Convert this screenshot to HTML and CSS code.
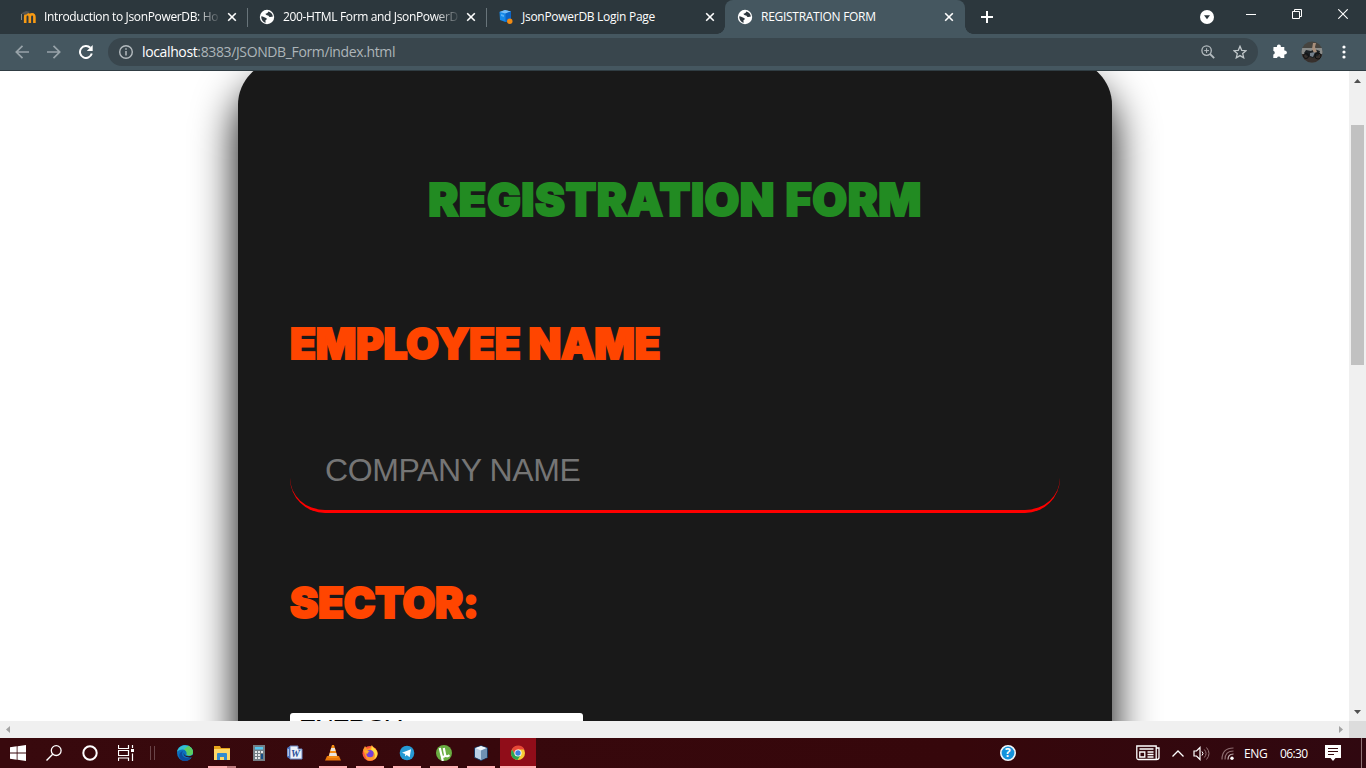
FILE: index.html
```
<!DOCTYPE html>
<html lang="en">
<head>
<meta charset="utf-8">
<title>REGISTRATION FORM</title>
<link rel="stylesheet" href="styles.css">
</head>
<body>
<svg class="defs" width="0" height="0">
  <symbol id="close" viewBox="0 0 10 10"><path d="M1.200 1.200l7.600 7.600M8.800 1.200L1.200 8.800" stroke="#fff" stroke-width="1.600"/></symbol>
  <symbol id="globe" viewBox="0 0 16 16"><circle cx="8" cy="8" r="7.200" fill="#fff"/><path d="M2.300 7.200c2 .2 3.200 1 4.700 1.800 1.300.6 1 1.600-.1 1.900-.8.300-.3 1.300-.2 2.800C4 13 2 10.500 2.300 7.200zM9.300 2.500c-.3 1.600-1.500 1.900-2.600 2.100-.5 1.200.8 1.700 2.300 1.800.9.200 1 1.700 2.400 1.700 1 0 1.700-.3 2.500-.5-.3-2.400-2-4.500-4.600-5.100z" fill="#2f3940"/></symbol>
</svg>
<div class="desktop">
  <header class="tabstrip">
    <div class="tab tab-first">
      <svg class="favicon" viewBox="0 0 16 16"><path d="M5.200 14V7.500M5.200 8q0-2.700 2.300-2.700T9.800 8v6M9.800 8q0-2.700 2.300-2.700T14.400 8v6" fill="none" stroke="#f79a14" stroke-width="2.600"/><path d="M1 4.500L6 2l4 .8-4 3z" fill="#555"/><path d="M1.500 5v6" stroke="#8a8a85"/></svg>
      <span class="tab-title fade">Introduction to JsonPowerDB: Ho</span><svg class="close"><use href="#close"/></svg>
    </div>
    <div class="tab tab-divided">
      <svg class="favicon"><use href="#globe"/></svg>
      <span class="tab-title fade">200-HTML Form and JsonPowerD</span><svg class="close"><use href="#close"/></svg>
    </div>
    <div class="tab tab-divided">
      <svg class="favicon" viewBox="0 0 16 16"><path d="M1.500 3L7 1l6 1.500v8L7.500 13 2 11z" fill="#1689e8"/><path d="M1.500 3L7 1l6 1.500-5.500 2z" fill="#78bdf5"/><path d="M7.500 4.500L13 2.500v8L7.500 13z" fill="#0c63c4"/><path d="M3 5l3 1v2L3 7z" fill="#56aef6"/><circle cx="11.800" cy="12.300" r="2.700" fill="#f28b13"/></svg>
      <span class="tab-title">JsonPowerDB Login Page</span><svg class="close"><use href="#close"/></svg>
    </div>
    <div class="tab tab-active">
      <svg class="favicon"><use href="#globe"/></svg>
      <span class="tab-title">REGISTRATION FORM</span><svg class="close"><use href="#close"/></svg>
    </div>
    <svg class="new-tab" viewBox="0 0 12 12"><path d="M6 0v12M0 6h12" stroke="#fff" stroke-width="2"/></svg>
    <div class="window-buttons">
      <svg width="14" height="14" viewBox="0 0 14 14"><circle cx="7" cy="7" r="7" fill="#fff"/><path d="M4 5.300h6L7 9.200z" fill="#2b363c"/></svg>
      <svg width="10" height="10" viewBox="0 0 10 10"><path d="M0 5.500h10" stroke="#fff"/></svg>
      <svg width="10" height="10" viewBox="0 0 10 10"><path d="M.5 2.500h7v7h-7zM2.500 2.500v-2h7v7h-2" fill="none" stroke="#fff"/></svg>
      <svg width="10" height="10" viewBox="0 0 10 10"><path d="M.3.3l9.400 9.400M9.700.3L.3 9.700" stroke="#fff" stroke-width="1.100"/></svg>
    </div>
  </header>

  <div class="toolbar">
    <svg class="nav" viewBox="0 0 14 14"><path d="M14 7H1.500M7.500.8L1.300 7l6.200 6.200" fill="none" stroke="#98a3a9" stroke-width="1.700"/></svg>
    <svg class="nav" viewBox="0 0 14 14"><path d="M0 7h12.500M6.500.8L12.700 7l-6.200 6.200" fill="none" stroke="#98a3a9" stroke-width="1.700"/></svg>
    <svg class="nav" viewBox="0 0 14 14"><path d="M12.800 8.600A6 6 0 1 1 11.300 2.800" fill="none" stroke="#fff" stroke-width="2"/><path d="M13.700 0v6H7.800z" fill="#fff"/></svg>
    <div class="omnibox">
      <svg width="14" height="14" viewBox="0 0 14 14"><circle cx="7" cy="7" r="6.300" fill="none" stroke="#b4bbbf" stroke-width="1.400"/><path d="M7 6v4.500M7 3.300v1.500" stroke="#b4bbbf" stroke-width="1.500"/></svg>
      <span class="url"><b>localhost</b>:8383/JSONDB_Form/index.html</span>
      <svg class="lens" width="14" height="14" viewBox="0 0 14 14"><circle cx="5.600" cy="5.600" r="4.700" fill="none" stroke="#b4bbbf" stroke-width="1.300"/><path d="M9 9l4.200 4.200" stroke="#b4bbbf" stroke-width="1.800"/><path d="M5.600 3.200V8M3.200 5.600H8" stroke="#b4bbbf"/></svg>
      <svg width="14" height="14" viewBox="0 0 14 14"><path d="M7 1.300l1.700 4 4.300.4-3.300 2.900 1 4.200L7 10.600l-3.700 2.200 1-4.200L1 5.700l4.300-.4z" fill="none" stroke="#c0c7ca" stroke-width="1.300"/></svg>
    </div>
    <svg class="puzzle" width="15" height="15" viewBox="0 0 15 15"><path d="M1.500 3H5a2 2 0 1 1 3.800 0h3.500v3.600a2 2 0 1 1 0 3.800V14H8.700a1.900 1.900 0 0 0-3.700 0H1.300v-3.500a1.900 1.900 0 0 0 0-3.700z" fill="#fff"/></svg>
    <svg class="avatar" width="22" height="22" viewBox="0 0 22 22"><clipPath id="round"><circle cx="11" cy="11" r="10.500"/></clipPath><g clip-path="url(#round)"><path fill="#46443f" d="M0 0h22v22H0z"/><path fill="#8a8c8a" d="M0 7h22v6H0z"/><path fill="#37302d" d="M0 13h22v9H0z"/><path d="M3 12l2-3 5 1 3-2 6 2-1 4-6 3-6-2z" fill="#1b2024"/><path d="M12 2h3l-1 4 2 5-3 1-2-4z" fill="#a88f7b"/><path d="M9 12l5-1-2 5-3-1z" fill="#75808c"/><circle cx="5" cy="15" r="2.500" fill="none" stroke="#111"/><circle cx="17" cy="15" r="3" fill="none" stroke="#111"/></g></svg>
    <svg class="dots" width="4" height="14" viewBox="0 0 4 14"><g fill="#fff"><circle cx="2" cy="2" r="1.600"/><circle cx="2" cy="7" r="1.600"/><circle cx="2" cy="12" r="1.600"/></g></svg>
  </div>

  <div class="browser-view">
    <main class="page">
      <form class="card">
        <h1>REGISTRATION FORM</h1>
        <label class="employee">EMPLOYEE NAME</label>
        <input class="company" type="text" placeholder="COMPANY NAME">
        <label class="sector">SECTOR:</label>
        <div class="choice">ENERGY</div>
      </form>
    </main>
    <div class="scroll-y">
      <svg width="7" height="4" viewBox="0 0 7 4"><path d="M0 4h7L3.500 0z" fill="#505050"/></svg>
      <div class="thumb"></div>
      <svg class="down" width="7" height="4" viewBox="0 0 7 4"><path d="M0 0h7L3.500 4z" fill="#505050"/></svg>
    </div>
    <div class="scroll-x">
      <svg width="4" height="7" viewBox="0 0 4 7"><path d="M4 0v7L0 3.500z" fill="#a3a3a3"/></svg>
      <svg width="4" height="7" viewBox="0 0 4 7"><path d="M0 0v7l4-3.500z" fill="#a3a3a3"/></svg>
    </div>
    <div class="scroll-corner"></div>
  </div>

  <footer class="taskbar">
    <div class="system">
      <svg width="16" height="16" viewBox="0 0 16 16"><path d="M0 2.200l6.700-.9v6.300H0zM7.500 1.200L16 0v7.600H7.500zM0 8.400h6.700v6.300L0 13.800zM7.500 8.400H16V16l-8.500-1.200z" fill="#fff"/></svg>
      <svg width="16" height="16" viewBox="0 0 16 16"><circle cx="10.200" cy="5.600" r="4.900" fill="none" stroke="#fff" stroke-width="1.300"/><path d="M6.700 9.200L.5 15.400" stroke="#fff" stroke-width="1.400"/></svg>
      <svg width="16" height="16" viewBox="0 0 16 16"><circle cx="8" cy="8" r="6.700" fill="none" stroke="#fff" stroke-width="2"/></svg>
      <svg width="16" height="16" viewBox="0 0 16 16"><path d="M.5 0v3.500h10V0M.5 16v-3h10v3M.5 5.500h10v5H.5zM14.500 0v3M14.500 8.500V16" fill="none" stroke="#fff" stroke-width="1.200"/><path d="M13 4h3v3h-3z" fill="#fff"/></svg>
    </div>
    <div class="grip"></div>
    <div class="apps">
      <div class="app"><svg viewBox="0 0 16 16"><circle cx="8" cy="8" r="8" fill="#0c70bf"/><path d="M0 7C1 1 7-1 11.500.8 15 2.500 17 6 15.500 9c-1 2-5 2-6 .5C11 7 9 4.500 5.500 4.500 3 4.500 1 5.500 0 7z" fill="#35c0d0"/><path d="M11.500.8C15 2.500 17 6 15.500 9c-1 2-5 2-6 .5.700-2-.5-4-2.500-5z" fill="#5bce61"/><path d="M6 6c-3 4 1 8.500 8 6.500-2 3-5 4-8 3.200C1 14 1 7 6 6z" fill="#0d4b9e"/><path d="M7 8c-.5 3 3.500 4.500 9 2v2C11 13.500 5.500 11 7 8z" fill="#35080d"/></svg></div>
      <div class="app running folder"><svg viewBox="0 0 16 16"><path d="M0 1h6l1 2h9v4H0z" fill="#e5a51b"/><path d="M0 4h16v11H0z" fill="#ffd868"/><path d="M3 9q0-1 1-1h8q1 0 1 1v6h-3v-3H6v3H3z" fill="#338bd0"/></svg></div>
      <div class="app"><svg viewBox="0 0 16 16"><path d="M2 0h12v16H2z" fill="#747f86"/><path d="M4 2h8v2.500H4z" fill="#54c9f2"/><path d="M4 6h2v2H4zm3 0h2v2H7zm3 0h2v2h-2zM4 9h2v2H4zm3 0h2v2H7zM4 12h2v2H4zm3 0h2v2H7z" fill="#e4e8ea"/><path d="M10 9h2v5h-2z" fill="#164f89"/></svg></div>
      <div class="app word-app"><svg viewBox="0 0 16 16"><path d="M3 1h8v3h4v10H3z" fill="#edf2fa" stroke="#6a87c4"/><path d="M0 3l3-2v13l-3-2z" fill="#4c72bc"/><path d="M1.200 4v7" stroke="#dbe5f6"/><text x="4" y="12" class="word">W</text></svg></div>
      <div class="app running"><svg viewBox="0 0 16 16"><path d="M2 11h12l2 4.500H0z" fill="#e9770a"/><path d="M7 0h2l4 13H3z" fill="#f58d14"/><path d="M6.200 3h3.600l.8 3H5.400zM4.800 8h6.400l.8 3H4z" fill="#e9e5df"/></svg></div>
      <div class="app running"><svg viewBox="0 0 16 16"><circle cx="8" cy="8.500" r="7.500" fill="#ff563c"/><path d="M1 5l2-4 2 3 3-1 2-3c0 3 3 2 5 6 3 8-6 11-10 9z" fill="#ff992c"/><path d="M10 0c0 3 4 3 5 7 1 3-1 6-3 7 2-4 1-7-3-8z" fill="#ffde43"/><circle cx="8" cy="8.700" r="3.600" fill="#7540d9"/><path d="M2 6c3-1 4 0 6 1-3 0-2 2-3 2z" fill="#ffaf2a"/></svg></div>
      <div class="app running"><svg viewBox="0 0 16 16"><circle cx="8" cy="8" r="7.300" fill="#2699d3"/><path d="M3 7.800l9-3.600-1.300 8-3-2.200-1.700 1.600.2-2.500z" fill="#fff"/></svg></div>
      <div class="app running"><svg viewBox="0 0 16 16"><circle cx="8" cy="8" r="8" fill="#6aad42"/><path d="M3.800 3l1.700 7.500c.7 2.300 4 1.500 3.500-1L7.800 3M9 9.500c.5 2.500 2.800 2 4.500.7M5.500 10l1.300 6" fill="none" stroke="#fff" stroke-width="2.200"/></svg></div>
      <div class="app running"><svg viewBox="0 0 16 16"><path d="M8 .7l6.500 2.300v9.500L8 15.500l-6.500-3V3z" fill="#b9d0e6" stroke="#17365f"/><path d="M2.300 3L8 1l5.700 2L8 5.500z" fill="#f0f7fa"/><path d="M8 5.500L14 3v9.300L8 15z" fill="#6f91b4"/></svg></div>
      <div class="app running active"><svg viewBox="0 0 16 16"><circle cx="8" cy="8" r="7" fill="#f8cc35"/><path d="M2 4.400a7 7 0 0 1 12.500.1H8L5 9.700z" fill="#e84737"/><path d="M2 4.400A7 7 0 0 0 7.500 15L11 9.500 5 9.700z" fill="#2ca653"/><circle cx="8" cy="8" r="3.600" fill="#fff"/><circle cx="8" cy="8" r="2.700" fill="#3f81df"/></svg></div>
    </div>
    <svg class="help" width="16" height="16" viewBox="0 0 16 16"><circle cx="8" cy="8" r="7.200" fill="#1593dc" stroke="#f2f7fa" stroke-width="1.600"/><text x="5" y="12.200">?</text></svg>
    <div class="tray">
      <svg class="news" width="24" height="16" viewBox="0 0 24 16"><path d="M.8 1h19.400v13.500H2.500A1.700 1.700 0 0 1 .8 13zM20.500 3H23v9.500q0 2-2.500 2M3.500 4h14M11.500 7h6M11.500 9.500h6M11.500 12h6M3.800 7h5v5h-5z" fill="none" stroke="#fff" stroke-width="1.300"/></svg>
      <svg class="chevron" width="12" height="7" viewBox="0 0 12 7"><path d="M.5 6.500L6 1l5.500 5.500" fill="none" stroke="#fff" stroke-width="1.300"/></svg>
      <svg class="speaker" width="17" height="15" viewBox="0 0 17 15"><path d="M1 5h2.500L7 1.500v12L3.500 10H1z" fill="none" stroke="#fff" stroke-width="1.200"/><path d="M9 5.500q2 2 0 4" fill="none" stroke="#fff"/><path d="M11.300 3.500q3.500 4 0 8M13.500 1.500q5 6 0 12" fill="none" stroke="#967579"/></svg>
      <svg class="wifi" width="13" height="13" viewBox="0 0 13 13"><g fill="none" stroke="#8d6c70" stroke-width="1.200"><path d="M1 12.500Q1 1 12.500 1M4 12.500Q4 4 12.500 4"/><path d="M7 12.500Q7 7 12.500 7" stroke="#c9b6b8"/></g><circle cx="11" cy="11.300" r="1.700" fill="#fff"/></svg>
      <span class="language">ENG</span><span class="clock">06:30</span>
      <svg class="notes" width="16" height="16" viewBox="0 0 16 16"><path d="M0 0h16v13h-5.500L8 16l-2.500-3H0z" fill="#fff"/><path d="M3 3.500h10M3 6.500h10M3 9.500h6" stroke="#35090d"/></svg>
      <div class="show-desktop"></div>
    </div>
  </footer>
</div>
</body>
</html>
```
FILE: styles.css
```
* { box-sizing: border-box; }
body { margin: 0; overflow: hidden; font-family: "Open Sans", "Noto Sans", sans-serif; }
svg { display: block; flex: none; }
.defs { position: absolute; }
.desktop { width: 1366px; height: 768px; display: grid; grid-template-rows: 34px 37px 667px 30px; overflow: hidden; }

.tabstrip { display: flex; background: #2c373d; color: #fff; font-size: 12px; }
.tab { position: relative; display: flex; align-items: center; width: 239px; height: 34px; padding: 0 10px 0 12px; flex: none; }
.tab-first { width: 247px; padding-left: 20px; }
.tab-divided::before { content: ""; position: absolute; left: 0; top: 8px; width: 1px; height: 19px; background: #68747a; }
.favicon { width: 16px; height: 16px; margin-right: 8px; }
.tab-title { flex: 1; min-width: 0; white-space: nowrap; line-height: 20px; letter-spacing: -.28px; margin-right: 7px; }
.fade { letter-spacing: -.35px; mask-image: linear-gradient(to right, #000 86%, transparent 101%); }
.close { width: 10px; height: 10px; }
.tab-active { width: 240px; background: #455760; border-radius: 8px 8px 0 0; padding-right: 11px; }
.tab-active::before, .tab-active::after { content: ""; position: absolute; bottom: 0; width: 8px; height: 8px; }
.tab-active::before { left: -8px; background: radial-gradient(circle at 0 0, transparent 7.500px, #455760 8px); }
.tab-active::after { right: -8px; background: radial-gradient(circle at 100% 0, transparent 7.500px, #455760 8px); }
.new-tab { width: 12px; height: 12px; margin: 11px 0 0 16px; }
.window-buttons { display: flex; margin-left: auto; padding: 9px 18px 0 0; }
.window-buttons svg { margin-left: 36px; }
.window-buttons svg:nth-child(1) { margin-left: 0; }
.window-buttons svg:nth-child(2) { margin-left: 32px; }
.window-buttons svg:first-child { margin-top: 1px; }

.toolbar { display: flex; align-items: center; padding: 0 20px 1px 15px; background: #455760; border-bottom: 1px solid #303d43; }
.nav { width: 14px; height: 14px; margin-right: 18px; }
.omnibox { display: flex; align-items: center; width: 1150px; height: 28px; margin-left: -3px; padding: 0 11px; border-radius: 14px; background: #39464d; }
.url { margin-left: 9px; color: #adb5b9; font-size: 14px; line-height: 20px; letter-spacing: -.37px; }
.url b { font-weight: 400; color: #fff; }
.lens { margin-left: auto; margin-right: 18px; }
.puzzle { margin-left: 14px; }
.avatar { margin-left: 14px; }
.dots { margin-left: 19px; }

.browser-view { display: grid; grid-template: 650px 17px / 1349px 17px; background: #fff; min-height: 0; }
.page { overflow: hidden; background: #fff; }
.card { display: flex; flex-direction: column; align-items: flex-start; width: 874px; height: 900px; margin: -11px 0 0 238px; padding: 110px 52px; border-radius: 45px; background: #191919; box-shadow: 0 26px 44px #000; }
.card h1, .card label { margin: 0; height: 60px; font-family: Inter, Lato, sans-serif; font-size: 45px; font-weight: 900; line-height: 60px; white-space: nowrap; -webkit-text-stroke: 2px; paint-order: stroke; }
.card h1 { align-self: center; color: #228b22; letter-spacing: .5px; word-spacing: 1px; line-height: 59px; }
.card label { color: #ff4500; font-size: 42.500px; letter-spacing: -.35px; }
.card .employee { margin-top: 84px; }
.company { width: 770px; height: 86px; margin-top: 53px; padding: 4px 35px 0; border: 0; border-bottom: 3px solid #f00; border-radius: 35px; outline: 0; background: transparent; font-family: "Liberation Sans", Arial, sans-serif; font-size: 32px; letter-spacing: -.4px; }
.company::placeholder { color: #757575; opacity: 1; }
.card .sector { margin-top: 60px; }
.choice { width: 293px; height: 60px; flex: none; margin-top: 80px; padding: 1px 9px; border-radius: 3px; background: #fff; color: #000; font: 26px/30px "Liberation Sans", Arial, sans-serif; letter-spacing: -1.300px; }

.scroll-y { display: flex; flex-direction: column; align-items: center; padding: 8px 0 7px; background: #f0f0f0; }
.thumb { width: 13px; height: 240px; margin-top: 42px; background: #c1c1c1; }
.down { margin-top: auto; }
.scroll-x { display: flex; justify-content: space-between; align-items: center; padding: 0 6px; background: #f0f0f0; }
.scroll-corner { background: #dcdcdc; }

.taskbar { display: flex; align-items: center; background: linear-gradient(90deg, #38090d, #36070b 70%, #300810); color: #fff; }
.system { display: flex; gap: 20px; padding-left: 10px; }
.grip { width: 5px; height: 14px; margin: 0 12px 0 16px; border: 1px solid #694448; border-width: 0 1px; }
.apps { display: flex; gap: 1px; }
.app { position: relative; display: flex; justify-content: center; align-items: center; width: 36px; height: 30px; }
.app svg { width: 16px; height: 16px; }
.word-app { padding-right: 3px; }
.word { font: italic bold 10px "Liberation Serif", serif; fill: #264d99; }
.running::after { content: ""; position: absolute; left: 4px; right: 4px; bottom: 0; height: 2px; background: #ffb0b4; }
.folder::after { background: linear-gradient(90deg, #ffb0b4 68%, #bd7a7e 68%); }
.active { background: #900d19; }
.active::after { left: 0; right: 0; }
.help { margin-left: 464px; }
.help text { font: bold 12px "Open Sans", sans-serif; fill: #fff; }
.tray { display: flex; flex: 1; align-items: center; margin-left: 120px; font-size: 12px; letter-spacing: -.4px; white-space: nowrap; }
.chevron { margin-left: 12px; }
.speaker { margin-left: 9px; }
.wifi { margin-left: 11px; }
.language { width: 24px; margin-left: 10px; }
.clock { width: 29px; margin-left: 12px; letter-spacing: -.6px; }
.notes { margin-left: auto; }
.show-desktop { width: 1px; height: 30px; margin: 0 4px 0 20px; background: #8f7376; }
```
